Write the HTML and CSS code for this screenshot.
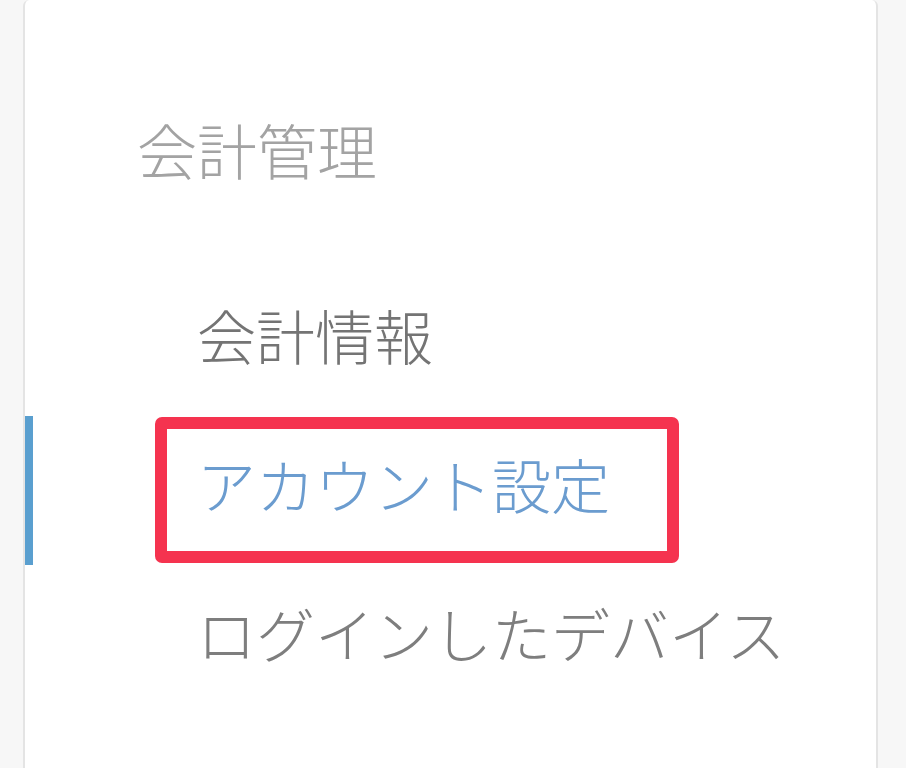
FILE: index.html
```html
<!DOCTYPE html>
<html lang="ja">
<head>
<meta charset="utf-8">
<title>会計管理</title>
<link rel="stylesheet" href="styles.css">
</head>
<body>
<aside class="card">
  <h2 class="section-title">会計管理</h2>
  <ul class="menu">
    <li class="menu-item">会計情報</li>
    <li class="menu-item is-active">アカウント設定<span class="highlight"></span></li>
    <li class="menu-item">ログインしたデバイス</li>
  </ul>
</aside>
</body>
</html>
```

FILE: styles.css
```css
html, body {
  margin: 0;
  padding: 0;
  height: 100%;
  overflow: hidden;
  background: #f7f7f7;
}

body {
  font-family: "Noto Sans CJK JP", "Noto Sans", sans-serif;
}

.card {
  box-sizing: border-box;
  margin-left: 23px;
  width: 855px;
  height: 100%;
  background: #ffffff;
  border-left: 2px solid #e4e4e4;
  border-right: 2px solid #e4e4e4;
  border-radius: 6px 6px 0 0;
  padding-top: 109px;
}

.section-title {
  margin: 0;
  padding-left: 112px;
  font-size: 60px;
  line-height: 80px;
  font-weight: 300;
  color: #a3a3a3;
}

.menu {
  list-style: none;
  margin: 78px 0 0 0;
  padding: 0;
}

.menu-item {
  position: relative;
  box-sizing: border-box;
  height: 149px;
  padding-left: 164px;
  padding-bottom: 14px;
  border-left: 8px solid transparent;
  font-size: 59px;
  line-height: 135px;
  font-weight: 300;
  color: #747474;
  white-space: nowrap;
}

.menu-item:last-child {
  color: #7e7e7e;
}

.menu-item.is-active {
  border-left-color: #5a9fcf;
  color: #6b9ccf;
}

.highlight {
  position: absolute;
  left: 122px;
  top: 1px;
  width: 524px;
  height: 146px;
  box-sizing: border-box;
  border: 12px solid #f5334f;
  border-radius: 7px;
  pointer-events: none;
}
```
